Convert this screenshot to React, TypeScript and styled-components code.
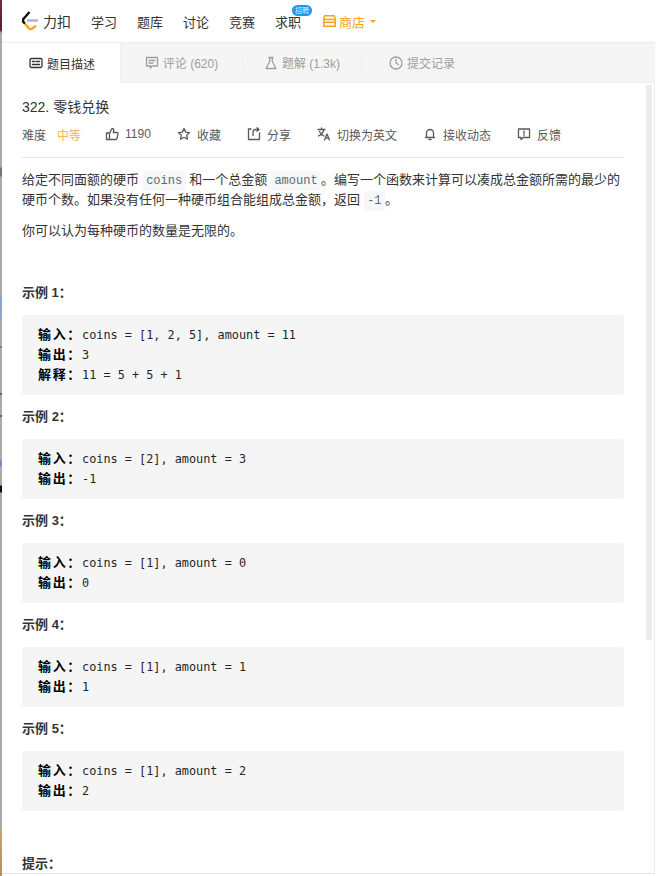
import React from "react";
import styled, { createGlobalStyle } from "styled-components";

const Global = createGlobalStyle`
  html, body { margin: 0; padding: 0; background: #fff; overflow: hidden; }
  * { box-sizing: border-box; }
`;

const CN = `"Liberation Sans", "Noto Sans CJK SC", sans-serif`;
const MONO = `"DejaVu Sans Mono", "Noto Sans CJK SC", monospace`;

const Page = styled.div`
  width: 656px; height: 876px; overflow: hidden; display: flex;
  font-family: ${CN}; color: #262626;
`;
const WindowEdge = styled.div`
  width: 2px; flex: none;
  background: linear-gradient(to bottom,
    #7a2a3a 0, #5a1f30 30px, #a9a9a9 33px, #a9a9a9 167px, #777 168px, #777 176px, #a9a9a9 177px,
    #a9a9a9 295px, #8fa5c8 296px, #8fa5c8 318px, #a9a9a9 319px, #a9a9a9 346px, #555 347px, #a9a9a9 348px,
    #a9a9a9 393px, #222 394px, #a9a9a9 395px, #a9a9a9 415px, #222 416px, #a9a9a9 417px,
    #a9a9a9 460px, #6f8fc0 461px, #6f8fc0 466px, #a9a9a9 467px, #a9a9a9 485px, #111 486px, #111 492px, #a9a9a9 493px,
    #a9a9a9 829px, #c9a860 830px, #b98f45 876px);
`;
const Column = styled.div`
  flex: 1; min-width: 0; display: flex; flex-direction: column;
`;
const Nav = styled.header`
  height: 43px; flex: none; display: flex; align-items: center; padding-left: 20px; font-size: 13px;
  border-bottom: 1px solid #eee;
`;
const Brand = styled.div`
  display: flex; align-items: center; gap: 3px; width: 69px; font-size: 14px; color: #333;
`;
const NavItem = styled.a`
  width: 46px; color: #333; position: relative; white-space: nowrap;
`;
const Badge = styled.span`
  position: absolute; top: -7px; left: 17px; width: 20px; height: 11px; border-radius: 6px;
  background: #2196f3; color: #d8ecff; font-size: 7px; line-height: 11px; text-align: center;
`;
const Shop = styled.a`
  display: flex; align-items: center; gap: 3px; margin-left: 2px; color: #ffa116; font-size: 13px;
`;
const Caret = styled.i`
  width: 0; height: 0; margin-left: 2px; border: 3px solid transparent; border-top-color: #ffa116; border-bottom: 0;
`;
const Tabs = styled.nav`
  height: 40px; flex: none; display: flex; background: #f5f5f5; border-bottom: 1px solid #eee;
  font-size: 12px; margin-right: 1px;
`;
const Tab = styled.div<{ $active?: boolean; $w: number }>`
  width: ${p => p.$w}px; display: flex; align-items: center; justify-content: center; gap: 4px;
  color: ${p => (p.$active ? "#333" : "#9e9e9e")};
  background: ${p => (p.$active ? "#fff" : "transparent")};
  ${p => p.$active ? "border-right: 1px solid #eee; margin-bottom: -1px; padding-left: 2px;" : ""}
`;
const TabSep = styled.span`
  width: 1px; height: 16px; background: #eee; align-self: center;
`;
const Body = styled.main`
  flex: 1; min-height: 0; position: relative; padding: 15px 30px 0 20px; margin: 0 1px 2px 0;
  border-right: 1px solid #eee; border-bottom: 1px solid #e6e6e6; overflow: hidden;
`;
const Scroll = styled.div`
  position: absolute; top: 2px; right: 2px; width: 6px; height: 555px; background: #ececec;
`;
const Title = styled.h1`
  margin: 0; font-size: 14px; font-weight: 400; line-height: 18px; color: #333;
`;
const Meta = styled.div`
  display: flex; align-items: center; height: 20px; margin-top: 8px; font-size: 12px; color: #595959;
`;
const Diff = styled.span`
  color: #ffa116; margin-left: 11px; margin-right: 24px; opacity: .8;
`;
const Action = styled.span<{ $w: number }>`
  display: flex; align-items: center; gap: 6px; width: ${p => p.$w}px; white-space: nowrap;
`;
const Rule = styled.hr`
  border: 0; height: 1px; background: #e6e6e6; margin: 13px 0 0;
`;
const Para = styled.p<{ $mt: number }>`
  margin: ${p => p.$mt}px 0 0; font-size: 13px; line-height: 20px; color: #333; white-space: nowrap;
`;
const Code = styled.code`
  font-family: "Liberation Mono", monospace; font-size: 12px; line-height: 1; color: #546e7a; background: #f7f7f7;
  border-radius: 3px; padding: 3px 3.5px;
`;
const ExampleTitle = styled.h2<{ $mt: number }>`
  margin: ${p => p.$mt}px 0 0; font-size: 13px; font-weight: 700; line-height: 20px; color: #333;
`;
const HintTitle = styled.h2`
  margin: 44px 0 0; font-size: 13px; font-weight: 700; line-height: 18px; color: #333;
`;
const Pre = styled.pre`
  margin: 12px 0 0; padding: 10px 16px; background: #f5f5f5; border-radius: 3px;
  font-family: ${MONO}; font-size: 11.85px; color: #262626;
`;
const PreLine = styled.div`
  height: 20px; line-height: 20px; overflow: hidden; position: relative; top: -1px;
`;
const Key = styled.strong`
  font-weight: 700; color: #000; font-family: "Noto Sans CJK SC", sans-serif; font-size: 13px; letter-spacing: 1.67px;
`;

const I = styled.svg`
  width: 14px; height: 14px; flex: none; fill: none; stroke: currentColor; stroke-width: 1.3;
  stroke-linecap: round; stroke-linejoin: round;
`;

const Logo = () => (
  <svg width="18" height="22" viewBox="0 0 18 22" fill="none" strokeWidth="2.4">
    <path d="M7.5 2 L1.4 9 Q0.3 10.5 1.5 12 L3 13.8" stroke="#111" />
    <path d="M3 13.8 L6.5 18 Q8.5 20 10.5 18.4 L14 15.6" stroke="#ffa116" />
    <path d="M5 10.5 H16" stroke="#b3b3b3" />
  </svg>
);

const examples = [
  { n: 1, lines: [["输入：", "coins = [1, 2, 5], amount = 11"], ["输出：", "3"], ["解释：", "11 = 5 + 5 + 1"]] },
  { n: 2, lines: [["输入：", "coins = [2], amount = 3"], ["输出：", "-1"]] },
  { n: 3, lines: [["输入：", "coins = [1], amount = 0"], ["输出：", "0"]] },
  { n: 4, lines: [["输入：", "coins = [1], amount = 1"], ["输出：", "1"]] },
  { n: 5, lines: [["输入：", "coins = [1], amount = 2"], ["输出：", "2"]] },
];

export default function App() {
  return (
    <Page>
      <Global />
      <WindowEdge />
      <Column>
        <Nav>
          <Brand><Logo />力扣</Brand>
          <NavItem>学习</NavItem>
          <NavItem>题库</NavItem>
          <NavItem>讨论</NavItem>
          <NavItem>竞赛</NavItem>
          <NavItem>求职<Badge>招聘</Badge></NavItem>
          <Shop>
            <svg width="13" height="12" viewBox="0 0 13 12" fill="none" stroke="#ffa116" strokeWidth="1.5">
              <path d="M.8 3.6 L1.8.8 H11.2 L12.2 3.6 V11.2 H.8 Z M.8 4.6 H12.2 M.8 7.2 H12.2" />
            </svg>
            商店<Caret />
          </Shop>
        </Nav>
        <Tabs>
          <Tab $active $w={119}>
            <I viewBox="0 0 14 14"><rect x="1" y="2.5" width="12" height="9" rx="1.5" /><path d="M3.5 5.5h2M3.5 8.5h7M7 5.5h3.5" /></I>
            题目描述
          </Tab>
          <Tab $w={121}>
            <I viewBox="0 0 14 14"><path d="M1.5 1.5h11v8.5H7l-1.5 2v-2h-4zM4 4.5h6M4 7h4" /></I>
            评论 (620)
          </Tab>
          <TabSep />
          <Tab $w={118}>
            <I viewBox="0 0 14 14"><path d="M5 1.5h4M5.7 1.5v4L2 12.5h10L8.3 5.5v-4" /></I>
            题解 (1.3k)
          </Tab>
          <TabSep />
          <Tab $w={120}>
            <I viewBox="0 0 14 14"><circle cx="7" cy="7" r="6" /><path d="M7 3.5V7l2.5 1.5" /></I>
            提交记录
          </Tab>
        </Tabs>
        <Body>
          <Scroll />
          <Title>322. 零钱兑换</Title>
          <Meta>
            难度<Diff>中等</Diff>
            <Action $w={72}><I viewBox="0 0 14 14"><path d="M4.5 6v6.5H1.5V6zM4.5 6.5L7 1.5c1.3 0 2 .8 1.8 2L8.3 5.5h3.7c.8 0 1.2.6 1 1.4l-1 4.6c-.1.6-.6 1-1.2 1H4.5" /></I>1190</Action>
            <Action $w={70}><I viewBox="0 0 14 14"><path d="M7 1.5l1.7 3.6 3.9.5-2.9 2.7.8 3.9L7 10.3l-3.5 1.9.8-3.9L1.4 5.6l3.9-.5z" /></I>收藏</Action>
            <Action $w={70}><I viewBox="0 0 14 14"><path d="M4 2H1.5v10.5h11V6M6 8.5V5c0-1.5 1-2.5 2.5-2.5H12M10 .8l2 1.7-2 1.7" /></I>分享</Action>
            <Action $w={106}><I viewBox="0 0 14 14"><path d="M1 2.5h7M4.5 1v1.5M7 2.5C6 6 4 8 1.5 9M2.5 4.5c1 2 2.5 3.5 4.5 4.5M7.5 13l2.5-6 2.5 6M8.4 11.2h3.2" /></I>切换为英文</Action>
            <Action $w={94}><I viewBox="0 0 14 14"><path d="M2.5 10.5h9M3.5 10.5V6a3.5 3.5 0 017 0v4.5M6 12.5h2" /></I>接收动态</Action>
            <Action $w={50}><I viewBox="0 0 14 14"><path d="M1.5 2h11v8.5H6l-2 2v-2H1.5zM7 4v3M7 8.5v.2" /></I>反馈</Action>
          </Meta>
          <Rule />
          <Para $mt={12}>
            给定不同面额的硬币 <Code>coins</Code> 和一个总金额 <Code>amount</Code>。编写一个函数来计算可以凑成总金额所需的最少的<br />
            硬币个数。如果没有任何一种硬币组合能组成总金额，返回 <Code>-1</Code>。
          </Para>
          <Para $mt={11}>你可以认为每种硬币的数量是无限的。</Para>
          <ExampleTitle $mt={42}>示例 1：</ExampleTitle>
          {examples.map(ex => (
            <React.Fragment key={ex.n}>
              {ex.n > 1 && <ExampleTitle $mt={12}>示例 {ex.n}：</ExampleTitle>}
              <Pre>
                {ex.lines.map(([k, v], i) => (
                  <PreLine key={i}><Key>{k}</Key>{v}</PreLine>
                ))}
              </Pre>
            </React.Fragment>
          ))}
          <HintTitle>提示：</HintTitle>
        </Body>
      </Column>
    </Page>
  );
}
